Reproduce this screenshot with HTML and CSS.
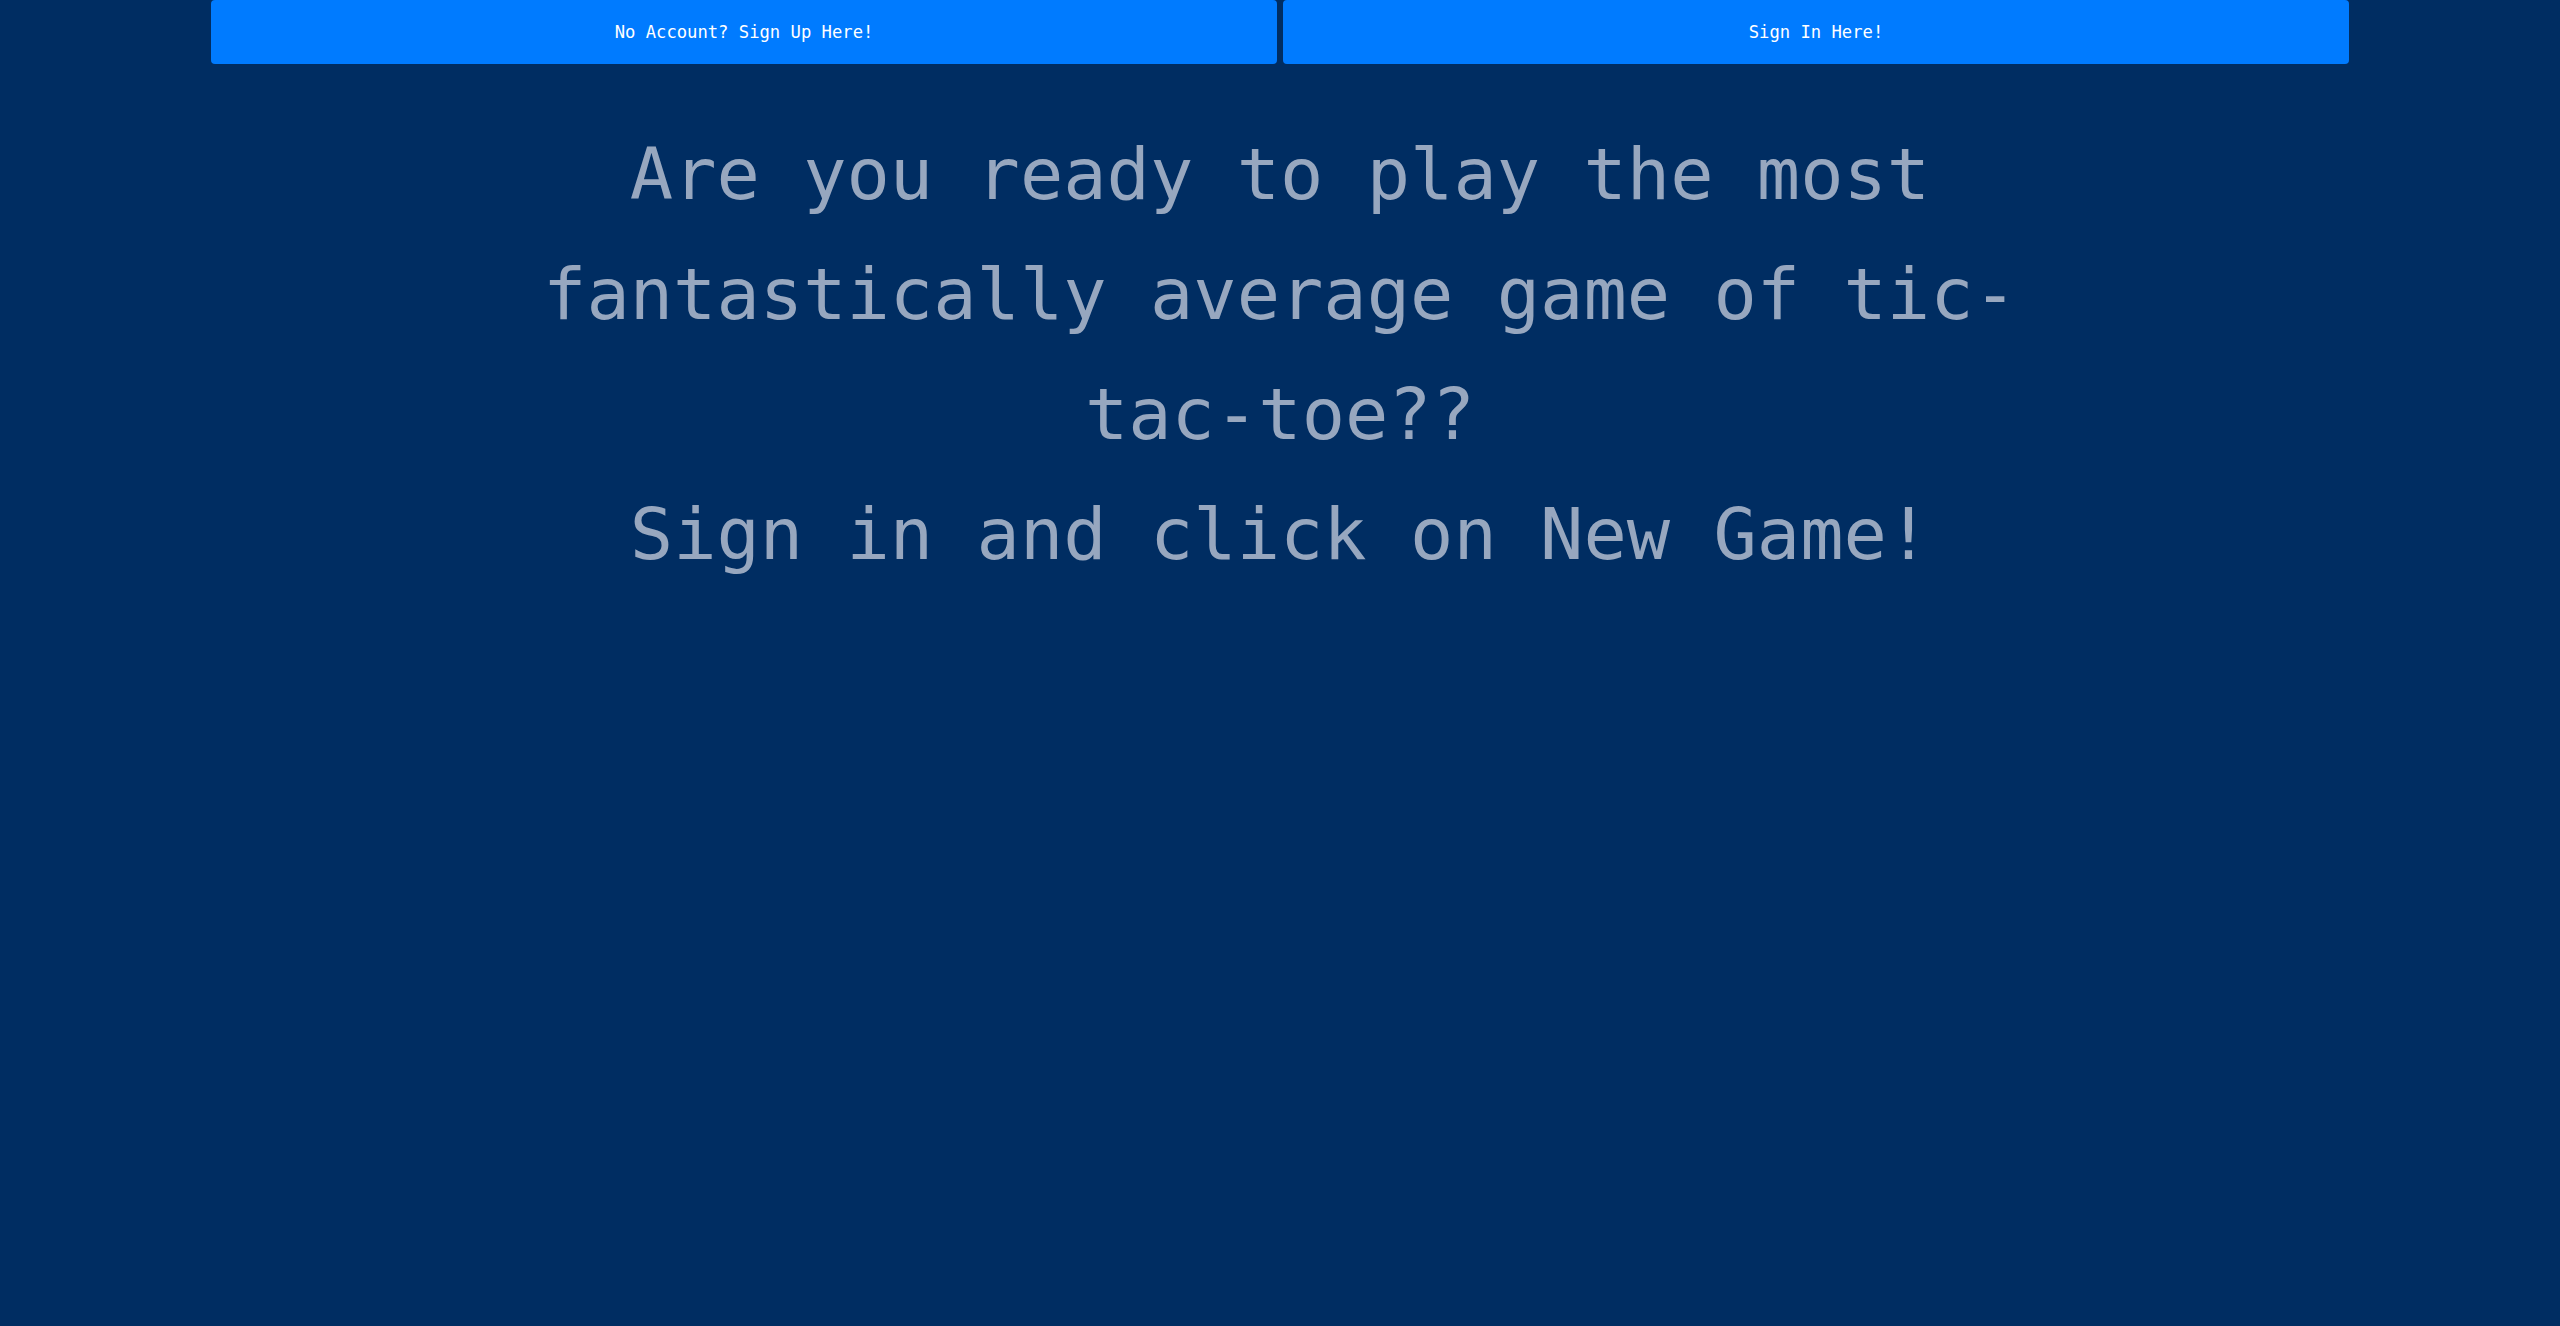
FILE: index.html
```html
<!DOCTYPE html>
<html lang="en">
<head>
<meta charset="utf-8">
<title>Tic-Tac-Toe</title>
<link rel="stylesheet" href="styles.css">
</head>
<body>
<div class="nav">
  <button class="btn">No Account? Sign Up Here!</button>
  <button class="btn">Sign In Here!</button>
</div>
<div class="hero">
  <h1 class="title">Are you ready to play the most fantastically average game of tic-tac-toe??</h1>
  <h1 class="title">Sign in and click on New Game!</h1>
</div>
</body>
</html>
```
FILE: styles.css
```css
html, body {
  margin: 0;
  padding: 0;
  background: #002d62;
  height: 100%;
}
body {
  font-family: "DejaVu Sans Mono", "Liberation Mono", monospace;
}
.nav {
  display: flex;
  gap: 6px;
  padding: 0 211px;
}
.btn {
  flex: 1;
  height: 64px;
  border: none;
  border-radius: 4px;
  background: #007bff;
  color: #ffffff;
  font-family: "DejaVu Sans Mono", "Liberation Mono", monospace;
  font-size: 17.2px;
  padding: 0;
  cursor: pointer;
}
.hero {
  display: flex;
  flex-direction: column;
  align-items: center;
  margin-top: 50px;
}
.title {
  width: 1560px;
  margin: 0;
  text-align: center;
  font-weight: normal;
  font-size: 72px;
  line-height: 120px;
  color: #97a7bf;
}
```
